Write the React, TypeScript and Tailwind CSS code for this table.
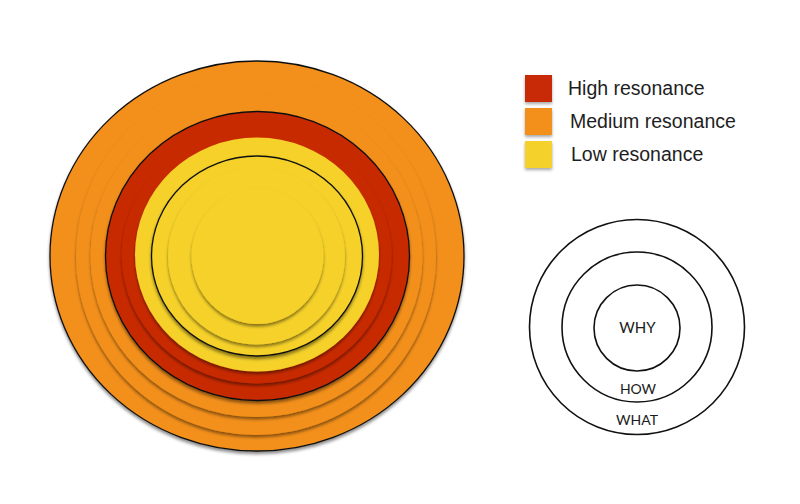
const ORANGE = "#f3901b";
const RED = "#c82906";
const YELLOW = "#f5d12b";

type Ring = {
  cx: number;
  cy: number;
  rx: number;
  ry: number;
  fill: string;
  outline?: boolean;
};

// back to front
const rings: Ring[] = [
  { cx: 257, cy: 256, rx: 207, ry: 195, fill: ORANGE, outline: true },
  { cx: 256, cy: 256, rx: 180, ry: 179, fill: ORANGE },
  { cx: 256.5, cy: 256, rx: 166, ry: 161, fill: ORANGE },
  { cx: 257.5, cy: 256, rx: 152, ry: 144.5, fill: RED, outline: true },
  { cx: 256.7, cy: 255.5, rx: 135, ry: 128, fill: RED },
  { cx: 257, cy: 254.5, rx: 122, ry: 117, fill: YELLOW },
  { cx: 257, cy: 256, rx: 105.5, ry: 100, fill: YELLOW, outline: true },
  { cx: 256.5, cy: 256, rx: 88.5, ry: 88.5, fill: YELLOW },
  { cx: 257.5, cy: 256, rx: 66, ry: 68, fill: YELLOW },
];

const legend = [
  { color: RED, label: "High resonance", indent: "ml-[16px]" },
  { color: ORANGE, label: "Medium resonance", indent: "ml-[18px]" },
  { color: YELLOW, label: "Low resonance", indent: "ml-[19px]" },
];

function ResonanceTarget() {
  return (
    <svg width={500} height={504} viewBox="0 0 500 504" className="block shrink-0">
      <defs>
        <filter id="drop" x="-10%" y="-10%" width="120%" height="125%">
          <feDropShadow dx="0" dy="2.5" stdDeviation="1.8" floodColor="#000" floodOpacity="0.45" />
        </filter>
      </defs>
      {rings.map((r, i) => (
        <ellipse
          key={i}
          cx={r.cx}
          cy={r.cy}
          rx={r.rx}
          ry={r.ry}
          fill={r.fill}
          stroke={r.outline ? "#111" : "none"}
          strokeWidth={r.outline ? 1.3 : 0}
          filter="url(#drop)"
        />
      ))}
    </svg>
  );
}

function GoldenCircle() {
  const font = "Lato, 'Open Sans', sans-serif";
  return (
    <svg width={300} height={260} viewBox="500 200 300 260" className="block mt-[32px]">
      <g fill="none" stroke="#111" strokeWidth={1.6}>
        <circle cx={637} cy={327} r={107.5} />
        <circle cx={637} cy={327} r={75} />
        <circle cx={637} cy={328} r={43} />
      </g>
      <g fill="#1a1a1a" fontFamily={font} textAnchor="middle">
        <text x={637.5} y={333} fontSize={15}>WHY</text>
        <text x={638} y={394} fontSize={14}>HOW</text>
        <text x={637} y={424.5} fontSize={14}>WHAT</text>
      </g>
    </svg>
  );
}

export default function App() {
  return (
    <div className="w-[800px] h-[504px] bg-white flex overflow-hidden">
      <ResonanceTarget />
      <div className="flex flex-col w-[300px]">
        <div className="flex flex-col gap-[6px] pt-[75px] pl-[25px]">
          {legend.map((item) => (
            <div key={item.label} className="flex items-center h-[27px]">
              <div
                className="w-[27px] h-[27px] shrink-0 shadow-[0_2px_3px_rgba(0,0,0,0.35)]"
                style={{ backgroundColor: item.color }}
              />
              <span
                className={`${item.indent} text-[19.5px] leading-none text-[#1e1e1e] font-['Liberation_Sans',Arial,sans-serif]`}
              >
                {item.label}
              </span>
            </div>
          ))}
        </div>
        <GoldenCircle />
      </div>
    </div>
  );
}
